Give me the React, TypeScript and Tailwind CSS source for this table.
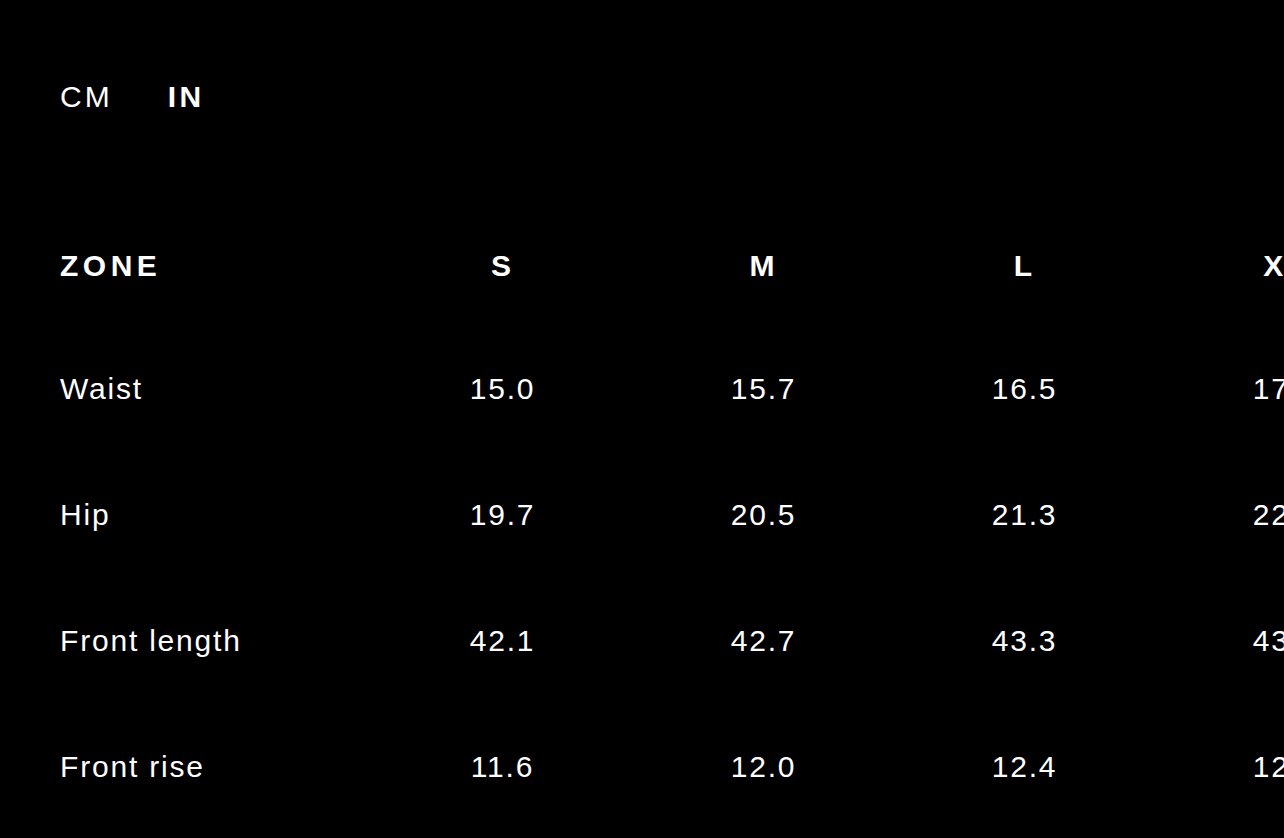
import React, { useState } from 'react';

type Unit = 'CM' | 'IN';

const SIZES = ['S', 'M', 'L', 'XL', 'XXL'];

const ROWS: { zone: string; values: string[] }[] = [
    { zone: 'Waist', values: ['15.0', '15.7', '16.5', '17.3', '18.1'] },
    { zone: 'Hip', values: ['19.7', '20.5', '21.3', '22.0', '22.8'] },
    { zone: 'Front length', values: ['42.1', '42.7', '43.3', '43.9', '44.5'] },
    { zone: 'Front rise', values: ['11.6', '12.0', '12.4', '12.8', '13.2'] },
    { zone: 'Back rise', values: ['15.2', '15.6', '16.0', '16.4', '16.8'] },
];

const UnitToggle: React.FC<{ unit: Unit; onChange: (u: Unit) => void }> = ({ unit, onChange }) => (
    <div className="flex items-center gap-[55px] h-9">
        {(['CM', 'IN'] as Unit[]).map(u => (
            <button
                key={u}
                onClick={() => onChange(u)}
                className={`text-[30px] leading-9 ${unit === u ? 'font-bold tracking-[0.12em]' : 'font-normal tracking-[0.1em]'}`}
            >
                {u}
            </button>
        ))}
    </div>
);

export default function App() {
    const [unit, setUnit] = useState<Unit>('IN');

    return (
        <div
            className="w-full h-[838px] overflow-hidden bg-black text-white pl-[60px] pt-[79px]"
            style={{ fontFamily: '"Liberation Sans", Arial, sans-serif' }}
        >
            <UnitToggle unit={unit} onChange={setUnit} />

            <div className="mt-[90px] grid grid-cols-[312px_repeat(5,261px)] w-max">
                <div className="h-[120px] flex items-center text-[30px] font-bold tracking-[0.15em]">ZONE</div>
                {SIZES.map(s => (
                    <div key={s} className="h-[120px] flex items-center justify-center text-[30px] font-bold tracking-[0.1em]">
                        {s}
                    </div>
                ))}

                {ROWS.map(row => (
                    <React.Fragment key={row.zone}>
                        <div className="h-[126px] flex items-center text-[30px] tracking-[0.06em]">{row.zone}</div>
                        {row.values.map((v, i) => (
                            <div key={i} className="h-[126px] flex items-center justify-center text-[30px] tracking-[0.06em]">
                                {v}
                            </div>
                        ))}
                    </React.Fragment>
                ))}
            </div>
        </div>
    );
}
